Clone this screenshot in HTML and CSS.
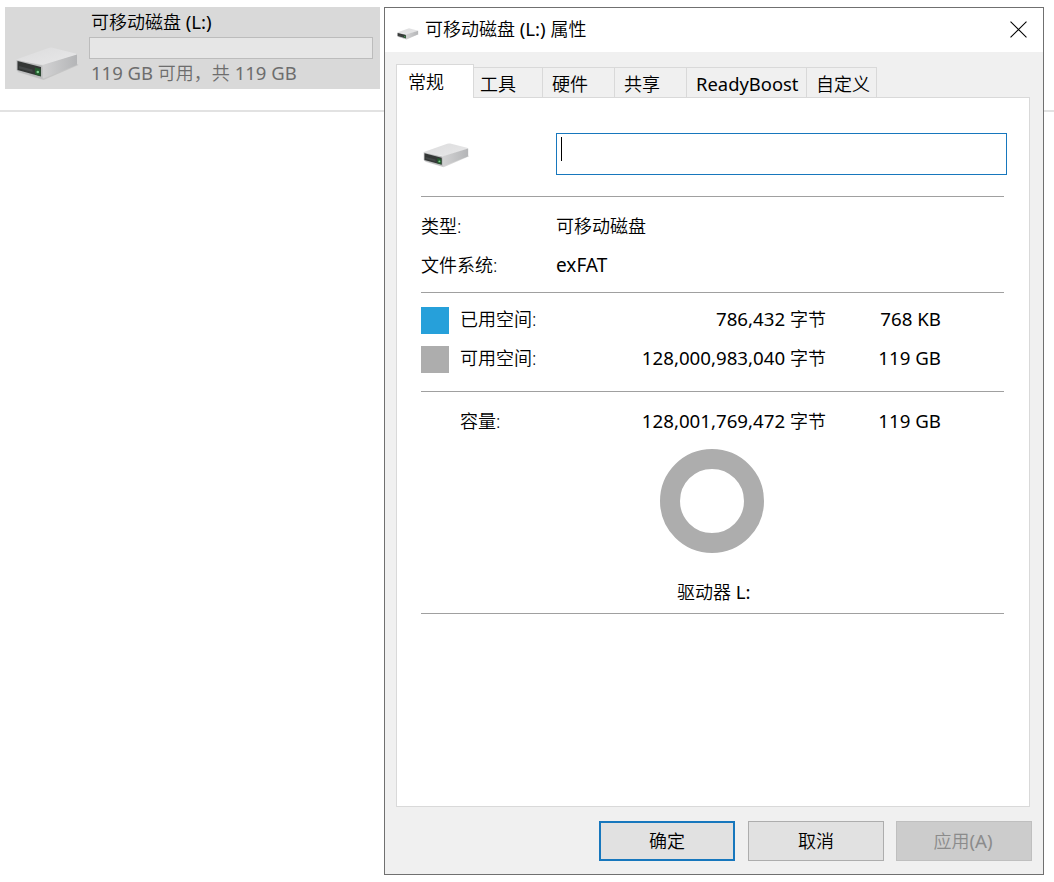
FILE: index.html
```html
<!DOCTYPE html>
<html lang="zh-CN">
<head>
<meta charset="utf-8">
<title>可移动磁盘 (L:) 属性</title>
<link rel="stylesheet" href="styles.css">
</head>
<body>
<svg width="0" height="0" class="defs" aria-hidden="true">
  <defs>
    <linearGradient id="top" x1="0" y1="0" x2="1" y2="1"><stop offset="0" stop-color="#dcdcdd"/><stop offset="1" stop-color="#e8e8e9"/></linearGradient>
    <linearGradient id="side" x1="0" y1="0" x2="1" y2="0"><stop offset="0" stop-color="#d2d2d3"/><stop offset="1" stop-color="#b4b5b7"/></linearGradient>
    <symbol id="drive" viewBox="0 0 64 34">
      <path d="M2 25L28 33L63 18L60 16Z" fill="#b5b5b5" opacity=".55"/>
      <path d="M1 13.500Q.5 12.600 2 12L33 1Q35 .3 37 .8L60 6.500Q62 7 61 8L29 18Z" fill="url(#top)"/>
      <path d="M27 18L61.500 7.500V17Q61.500 18 60 18.600L29 31Q27 32 27 30Z" fill="url(#side)"/>
      <path d="M1 13L27 18.500V32L2.500 24.500Q1 24 1 22.500Z" fill="#bcbdbe"/>
      <path d="M2 14L25.500 20V29.500L2 23Z" fill="#343736"/>
      <path d="M3.500 19L17 22.500V25L3.500 21.500Z" fill="#434747"/>
      <path d="M19.500 20.500L25 22V29L19.500 27.500Z" fill="#245a2e"/>
      <circle cx="22.300" cy="25" r="1.300" fill="#7fcf8e"/>
    </symbol>
  </defs>
</svg>

<main class="explorer">
  <section class="drive-tile">
    <svg class="tile-icon"><use href="#drive"/></svg>
    <div class="tile-info">
      <div class="tile-name">可移动磁盘 <span class="en">(L:)</span></div>
      <div class="usage"></div>
      <div class="tile-free"><span class="en">119 GB </span>可用，共<span class="en"> 119 GB</span></div>
    </div>
  </section>
</main>

<section class="dialog">
  <header class="titlebar">
    <svg class="title-icon"><use href="#drive"/></svg>
    <h1 class="title">可移动磁盘 <span class="en">(L:)</span> 属性</h1>
    <svg class="close" viewBox="0 0 16 16"><path d="M.5 .5L15.500 15.500M15.500 .5L.5 15.500" stroke="#000" stroke-width="1"/></svg>
  </header>

  <nav class="tabs">
    <div class="tab active">常规</div>
    <div class="tab tools">工具</div>
    <div class="tab hardware">硬件</div>
    <div class="tab sharing">共享</div>
    <div class="tab boost"><span class="en">ReadyBoost</span></div>
    <div class="tab custom">自定义</div>
  </nav>

  <div class="panel">
    <div class="name-row">
      <svg class="panel-icon"><use href="#drive"/></svg>
      <div class="name-field"><span class="caret"></span></div>
    </div>
    <div class="facts">
      <div class="fact"><span class="label">类型:</span><span>可移动磁盘</span></div>
      <div class="fact"><span class="label">文件系统:</span><span class="en filesystem">exFAT</span></div>
    </div>
    <div class="space">
      <div class="space-row"><i class="swatch used"></i><span>已用空间:</span><span class="bytes"><span class="en">786,432 </span>字节</span><span class="size en">768 KB</span></div>
      <div class="space-row"><i class="swatch free"></i><span>可用空间:</span><span class="bytes"><span class="en">128,000,983,040 </span>字节</span><span class="size en">119 GB</span></div>
    </div>
    <div class="capacity">
      <div class="space-row"><i class="swatch"></i><span>容量:</span><span class="bytes"><span class="en">128,001,769,472 </span>字节</span><span class="size en">119 GB</span></div>
      <div class="ring"></div>
      <div class="drive-label">驱动器 <span class="en">L:</span></div>
    </div>
  </div>

  <footer class="actions">
    <button class="btn default">确定</button>
    <button class="btn">取消</button>
    <button class="btn disabled" disabled>应用<span class="en">(A)</span></button>
  </footer>
</section>
</body>
</html>
```
FILE: styles.css
```css
* { box-sizing: border-box; }

body {
  margin: 0;
  height: 882px;
  overflow: hidden;
  position: relative;
  background: #fff;
  color: #000;
  font: 350 18px/24px "Noto Sans", "Noto Sans CJK SC", sans-serif;
}

.defs { position: absolute; }
.en { font-size: 18.7px; font-weight: 400; white-space: pre; }

/* Explorer background */
.explorer {
  height: 112px;
  padding: 7px 0 0 5px;
  border-bottom: 2px solid #e2e2e2;
}
.drive-tile {
  display: flex;
  width: 375px;
  height: 82px;
  background: #d9d9d9;
}
.tile-icon { width: 65px; height: 34px; margin: 40px 0 0 10px; flex: none; }
.tile-info { width: 284px; margin-left: 9px; }
.tile-name { height: 30px; padding: 3px 0 0 2px; white-space: nowrap; }
.usage { height: 22px; border: 1px solid #bcbcbc; background: #e6e6e6; }
.tile-free { padding: 2px 0 0 2px; color: #6d6d6d; white-space: nowrap; }
.tile-free .en { font-size: 18.5px; }

/* Properties window */
.dialog {
  position: absolute;
  left: 384px;
  top: 7px;
  width: 660px;
  height: 868px;
  border: 1px solid #707070;
  background: #f0f0f0;
}
.titlebar {
  display: flex;
  align-items: center;
  height: 44px;
  padding: 0 16px 2px 12px;
  background: #fff;
}
.title-icon { width: 22px; height: 12px; margin-top: 9px; }
.title { flex: 1; margin: 0 0 0 6px; font-size: 18px; font-weight: inherit; }
.close { width: 17px; height: 17px; }

.tabs {
  display: flex;
  align-items: flex-end;
  height: 46px;
  padding-left: 11px;
}
.tab {
  height: 31px;
  padding: 4px 0 0 9px;
  border: 1px solid #d9d9d9;
  border-left: 0;
  border-bottom: 0;
  white-space: nowrap;
}
.tab.active {
  z-index: 1;
  width: 78px;
  height: 34px;
  padding: 5px 0 0 11px;
  border-left: 1px solid #d9d9d9;
  background: #fff;
}
.tab.tools { width: 69px; padding-left: 6px; }
.tab.hardware, .tab.sharing { width: 72px; }
.tab.boost { width: 120px; }
.tab.boost .en { font-size: 18.4px; }
.tab.custom { width: 70px; padding-left: 9px; }

.panel {
  width: 634px;
  height: 710px;
  margin: -1px 0 0 11px;
  padding: 35px 22px 0 24px;
  border: 1px solid #d9d9d9;
  background: #fff;
}
.name-row { display: flex; height: 63px; }
.panel-icon { width: 47px; height: 25px; margin: 10px 88px 0 2px; flex: none; }
.name-field {
  width: 451px;
  height: 42px;
  margin-left: -2px;
  padding: 3px 4px;
  border: 1px solid #1777bd;
  flex: none;
}
.caret { display: block; width: 1px; height: 24px; background: #000; }
.facts, .space, .capacity { width: 583px; border-top: 1px solid #a0a0a0; }
.facts { height: 96px; padding-top: 10px; }
.fact { display: flex; height: 39px; line-height: 39px; }
.filesystem { font-size: 19px; line-height: 38px; }
.label { width: 135px; }
.space { height: 99px; padding-top: 8px; }
.space-row {
  display: grid;
  grid-template-columns: 39px 120px 246px 115px;
  align-items: center;
  height: 39px;
}
.space-row > span { padding-bottom: 3px; }
.swatch { width: 28px; height: 27px; }
.used { background: #26a0da; }
.free { background: #adadad; }
.bytes, .size { text-align: right; }
.capacity {
  display: flex;
  flex-direction: column;
  height: 223px;
  padding-top: 11px;
  border-bottom: 1px solid #a0a0a0;
}
.ring {
  width: 104px;
  height: 104px;
  margin: 7px 0 0 239px;
  border: 20.500px solid #adadad;
  border-radius: 50%;
}
.drive-label { margin: 27px 0 0 256px; }

.actions { display: flex; justify-content: flex-end; gap: 12px; padding: 14px 11px 0 0; }
.btn {
  width: 136px;
  height: 40px;
  padding: 0;
  border: 1px solid #adadad;
  background: #e1e1e1;
  color: #000;
  font: inherit;
}
.btn.default { margin-right: 1px; border: 2px solid #1777bd; }
.btn.disabled { padding-right: 2px; border-color: #bfbfbf; background: #ccc; color: #8b8b8b; }
```
